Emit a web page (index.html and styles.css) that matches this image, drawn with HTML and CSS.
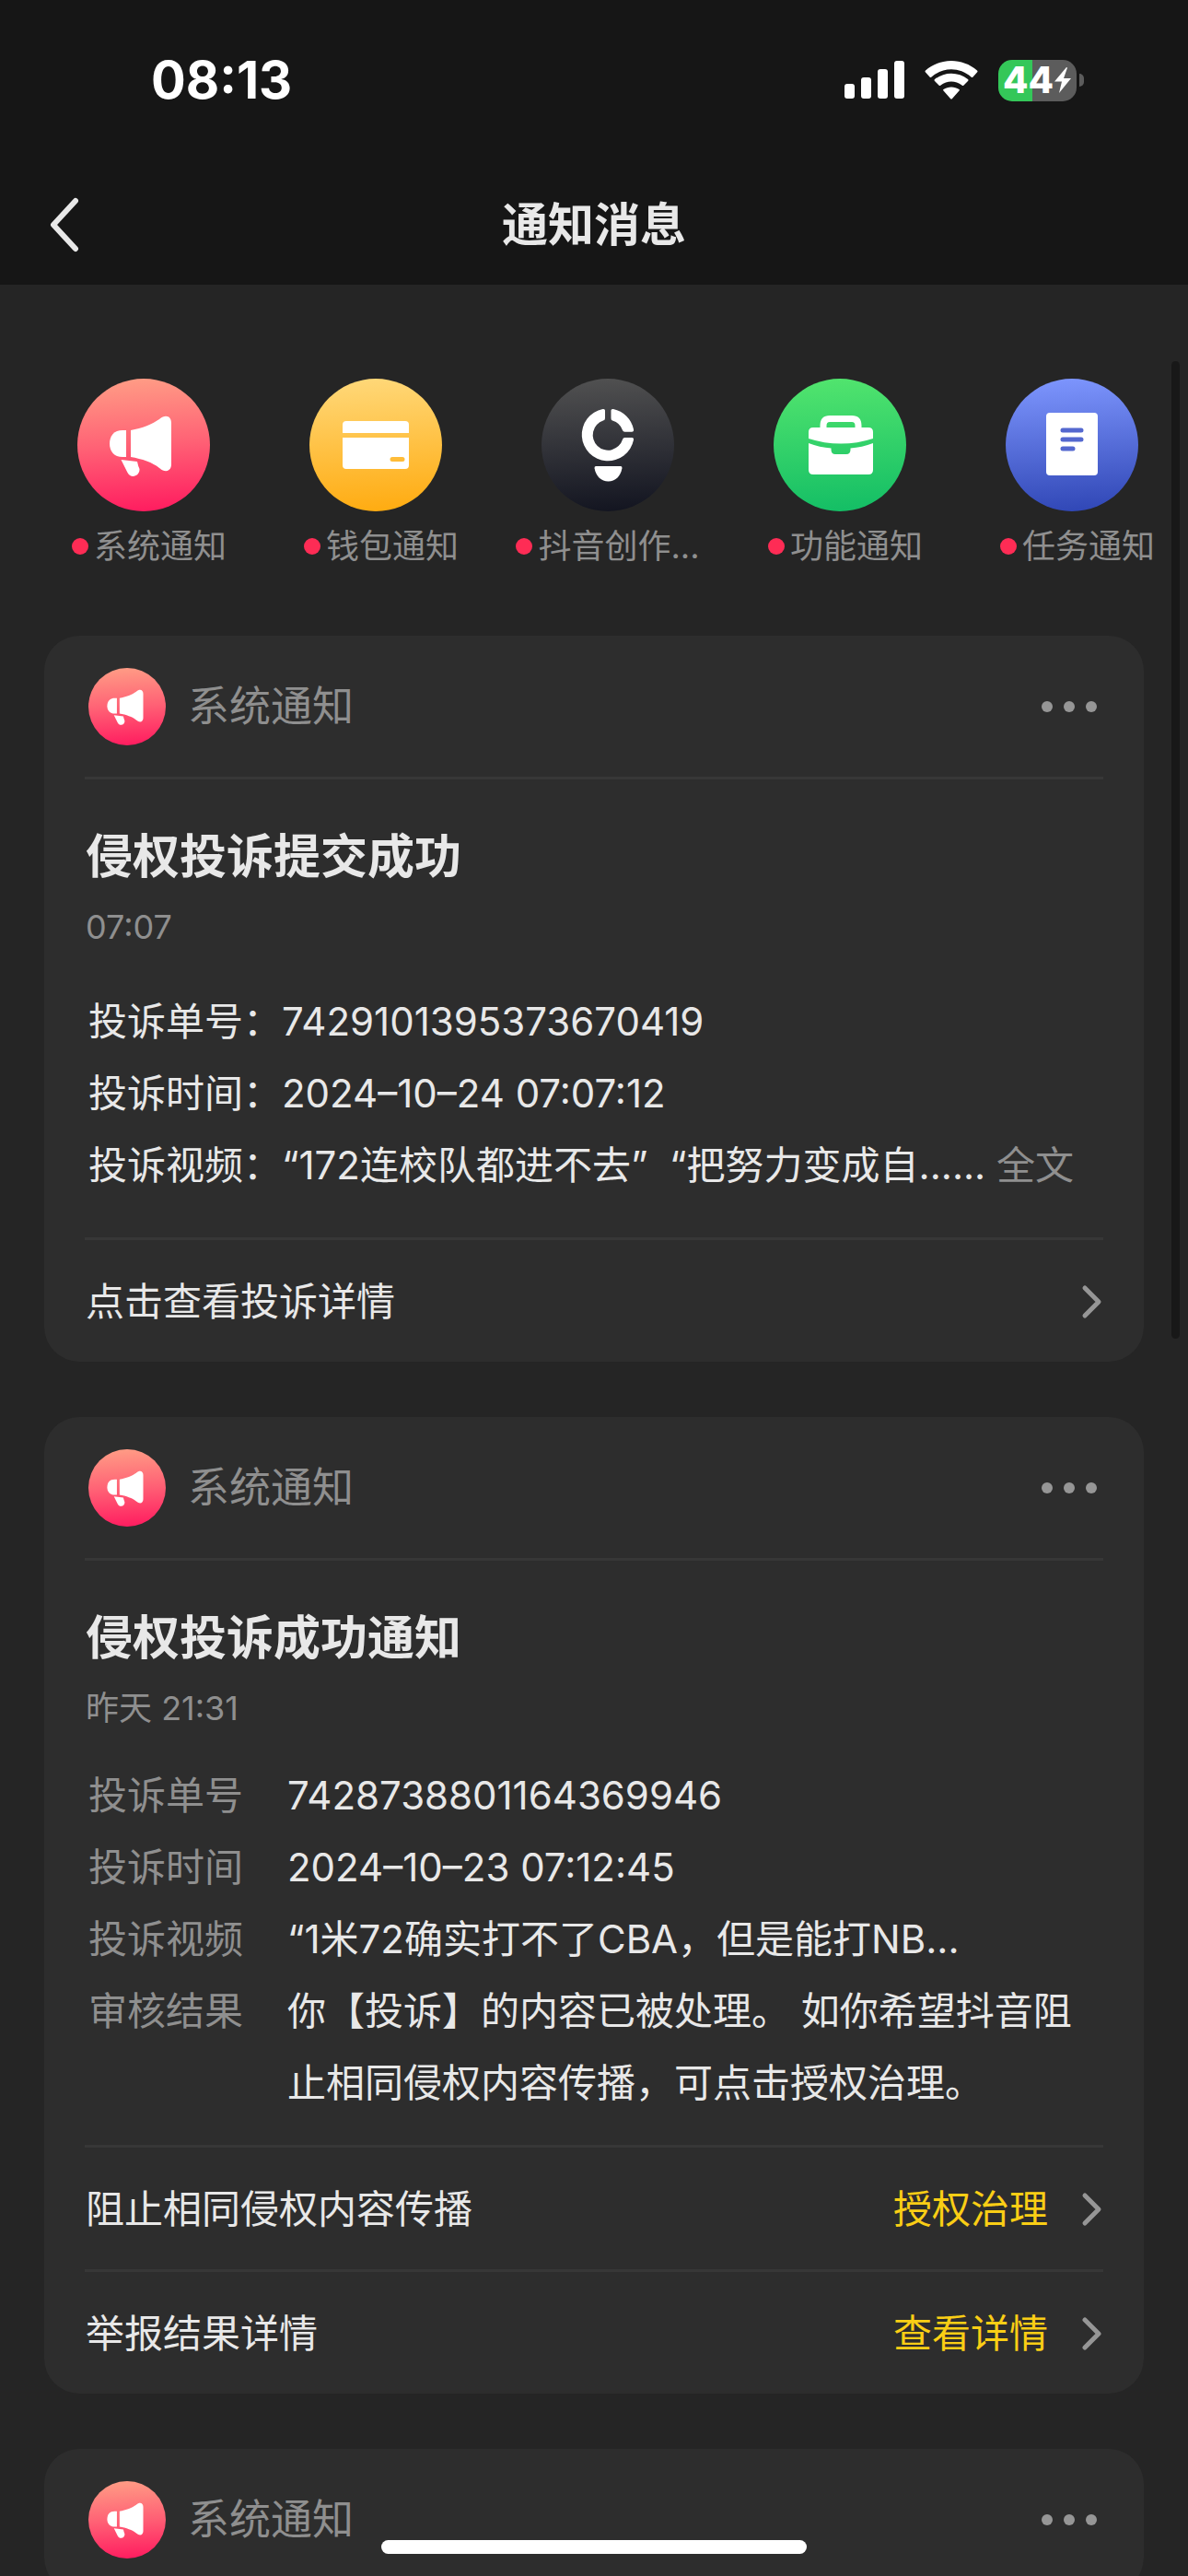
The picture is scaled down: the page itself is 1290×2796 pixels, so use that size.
FILE: index.html
```html
<!DOCTYPE html>
<html lang="zh-CN">
<head>
<meta charset="utf-8">
<meta name="viewport" content="width=device-width, initial-scale=1">
<title>通知消息</title>
<link rel="stylesheet" href="styles.css">
</head>
<body>
<svg class="defs" aria-hidden="true">
  <symbol id="megaphone" viewBox="0 0 144 144">
    <path d="M53 56H49C40 56 35 62 35 70.500S40 85 49 85H53Z"/>
    <path d="M58 56C70 54 82 49 89 44C96 38 102 41 102 48V93C102 100 96 103 89 97C82 91 70 87 58 85Z"/>
    <path d="M47.500 88L65 90Q66 95 67.500 98C68 106 58 109 54.500 102Z"/>
  </symbol>
  <symbol id="chevron" viewBox="0 0 24 40">
    <path d="M4 5L19 20L4 35" fill="none" stroke="currentColor" stroke-width="5" stroke-linecap="round" stroke-linejoin="round"/>
  </symbol>
</svg>

<div class="app">
  <header class="top">
    <div class="status">
      <time class="clock">08:13</time>
      <div class="indicators">
        <svg class="signal" viewBox="0 0 65 42" fill="#fff" aria-hidden="true">
          <rect x="0" y="25" width="11" height="16" rx="3"/><rect x="18" y="18" width="11" height="23" rx="3"/><rect x="36" y="9" width="11" height="32" rx="3"/><rect x="54" y="0" width="11" height="41" rx="3"/>
        </svg>
        <svg class="wifi" viewBox="0 0 58 42" fill="#fff" aria-hidden="true">
          <path d="M1 12.500Q0 11.500 1 10.500C17-3.500 41-3.500 57 10.500Q58 11.500 57 12.500L52.500 17.500Q51.500 18.500 50.500 17.500C38 6.500 20 6.500 7.500 17.500Q6.500 18.500 5.500 17.500Z"/>
          <path d="M11 22Q10 21 11 20C21.500 11.500 36.500 11.500 47 20Q48 21 47 22L42.500 26.500Q41.500 27.500 40.500 26.500C33.500 21 24.500 21 17.500 26.500Q16.500 27.500 15.500 26.500Z"/>
          <path d="M20.500 32.500Q19.500 31.500 20.500 31C25.500 27.500 32.500 27.500 37.500 31Q38.500 31.500 37.500 32.500L30 41Q29 42 28 41Z"/>
        </svg>
        <div class="battery">
          <div class="battery-body">
            <span>44</span>
            <svg class="bolt" viewBox="0 0 20 30" fill="#fff" aria-hidden="true"><path d="M14 1L1 16.500H9L6 29L19 13H11L15 1.500Z"/></svg>
          </div>
          <div class="battery-cap"></div>
        </div>
      </div>
    </div>
    <nav class="nav">
      <button class="back" type="button" aria-label="返回">
        <svg viewBox="0 0 34 60" aria-hidden="true"><path d="M30 4L6 30L30 56" fill="none" stroke="#e8e8e8" stroke-width="6" stroke-linecap="round" stroke-linejoin="round"/></svg>
      </button>
      <h1>通知消息</h1>
    </nav>
  </header>

  <main class="content">
    <nav class="tabs" aria-label="通知分类">
      <a class="tab" href="#system">
        <span class="disc disc-red"><svg viewBox="0 0 144 144" fill="#fff" aria-hidden="true"><use href="#megaphone"/></svg></span>
        <span class="tab-label">系统通知</span>
      </a>
      <a class="tab" href="#wallet">
        <span class="disc disc-yellow"><svg viewBox="0 0 144 144" fill="#fff" aria-hidden="true">
          <path d="M40 46H104Q108 46 108 50V59H36V50Q36 46 40 46Z"/>
          <path d="M36 64H108V94Q108 98 104 98H40Q36 98 36 94ZM90 85A2.500 2.500 0 0 0 90 90H101A2.500 2.500 0 0 0 101 85Z" fill-rule="evenodd"/>
        </svg></span>
        <span class="tab-label">钱包通知</span>
      </a>
      <a class="tab" href="#creator">
        <span class="disc disc-dark"><svg viewBox="0 0 144 144" fill="#fff" aria-hidden="true">
          <path d="M69 34.500V43Q69 45 67 45.500A16.500 16.500 0 1 0 88 66Q88.500 64 90.500 64H98Q100.500 64 100 66.500A28.400 28.400 0 1 1 66.500 33Q69 32.500 69 34.500Z"/>
          <path d="M75.500 34.500Q75.500 32.500 78 33A28.400 28.400 0 0 1 100 55Q100.500 57.700 98 57.700H90.500Q88.500 57.700 88 56A16.500 16.500 0 0 0 77 45.500Q75.500 45 75.500 43Z"/>
          <path d="M59 95H86Q87.500 95 87.500 97C86 106 80 111.500 72.500 111.500S59 106 57.500 97Q57.500 95 59 95Z"/>
        </svg></span>
        <span class="tab-label tab-label-long">抖音创作...</span>
      </a>
      <a class="tab" href="#feature">
        <span class="disc disc-green"><svg viewBox="0 0 144 144" fill="#fff" aria-hidden="true">
          <path d="M54 55V51Q54 43.500 61 43.500H85Q92 43.500 92 51V55" fill="none" stroke="#fff" stroke-width="7"/>
          <path d="M43 53H103Q108 53 108 58V65Q91 70.500 73 70.500T38 65V58Q38 53 43 53Z"/>
          <path d="M38 70Q50 74.500 62.500 75.500V77Q62.500 82 67 82H79Q83.500 82 83.500 77V75.500Q96 74.500 108 70V99Q108 104 103 104H43Q38 104 38 99Z"/>
        </svg></span>
        <span class="tab-label">功能通知</span>
      </a>
      <a class="tab" href="#task">
        <span class="disc disc-blue"><svg viewBox="0 0 144 144" fill="#fff" aria-hidden="true">
          <rect x="44" y="37" width="56" height="68" rx="4"/>
          <path d="M62 56H82M62 66H82M62 76H73" stroke="#5468cf" stroke-width="5" stroke-linecap="round"/>
        </svg></span>
        <span class="tab-label">任务通知</span>
      </a>
    </nav>

    <section class="feed">
      <article class="card">
        <header class="card-head">
          <span class="disc disc-small disc-red"><svg viewBox="0 0 144 144" fill="#fff" aria-hidden="true"><use href="#megaphone"/></svg></span>
          <span class="sender">系统通知</span>
          <button class="more" type="button" aria-label="更多"><i></i><i></i><i></i></button>
        </header>
        <div class="card-body">
          <h2>侵权投诉提交成功</h2>
          <time class="stamp">07:07</time>
          <div class="lines">
            <p>投诉单号：7429101395373670419</p>
            <p>投诉时间：2024–10–24 07:07:12</p>
            <p>投诉视频：“172连校队都进不去”&nbsp; “把努力变成自...... <a class="full" href="#full">全文</a></p>
          </div>
        </div>
        <a class="action" href="#detail"><span>点击查看投诉详情</span><svg class="chevron" aria-hidden="true"><use href="#chevron"/></svg></a>
      </article>

      <article class="card">
        <header class="card-head">
          <span class="disc disc-small disc-red"><svg viewBox="0 0 144 144" fill="#fff" aria-hidden="true"><use href="#megaphone"/></svg></span>
          <span class="sender">系统通知</span>
          <button class="more" type="button" aria-label="更多"><i></i><i></i><i></i></button>
        </header>
        <div class="card-body card-body-tight">
          <h2>侵权投诉成功通知</h2>
          <time class="stamp">昨天 21:31</time>
          <dl class="fields">
            <dt>投诉单号</dt><dd>7428738801164369946</dd>
            <dt>投诉时间</dt><dd>2024–10–23 07:12:45</dd>
            <dt>投诉视频</dt><dd>“1米72确实打不了CBA，但是能打NB...</dd>
            <dt>审核结果</dt><dd>你【投诉】的内容已被处理。 如你希望抖音阻止相同侵权内容传播，可点击授权治理。</dd>
          </dl>
        </div>
        <a class="action" href="#authorize"><span>阻止相同侵权内容传播</span><span class="action-link">授权治理</span><svg class="chevron" aria-hidden="true"><use href="#chevron"/></svg></a>
        <a class="action" href="#report"><span>举报结果详情</span><span class="action-link">查看详情</span><svg class="chevron" aria-hidden="true"><use href="#chevron"/></svg></a>
      </article>

      <article class="card">
        <header class="card-head">
          <span class="disc disc-small disc-red"><svg viewBox="0 0 144 144" fill="#fff" aria-hidden="true"><use href="#megaphone"/></svg></span>
          <span class="sender">系统通知</span>
          <button class="more" type="button" aria-label="更多"><i></i><i></i><i></i></button>
        </header>
      </article>
    </section>
  </main>
  <div class="scroll-thumb"></div>
  <div class="home-indicator"></div>
</div>
</body>
</html>
```
FILE: styles.css
```css
* {
  box-sizing: border-box;
}

body {
  margin: 0;
  background: #252525;
  color: #e8e8e8;
  font-family: Inter, "Noto Sans CJK SC", sans-serif;
  font-size: 42px;
  line-height: 78px;
}

h1, h2, p, dl, dd {
  margin: 0;
}

a {
  color: inherit;
  text-decoration: none;
}

button {
  padding: 0;
  border: 0;
  background: none;
}

.defs {
  position: absolute;
  width: 0;
  height: 0;
}

.app {
  position: relative;
  display: flex;
  flex-direction: column;
  height: 100vh;
  overflow: hidden;
}

/* Status bar and title */
.top {
  flex: none;
  background: #161616;
}

.status {
  display: flex;
  align-items: center;
  justify-content: space-between;
  height: 174px;
  padding: 0 113px 0 164px;
}

.clock {
  color: #fff;
  font-size: 56px;
  font-weight: 700;
}

.indicators {
  display: flex;
  align-items: center;
  gap: 22px;
}

.signal {
  width: 65px;
  height: 42px;
}

.wifi {
  width: 58px;
  height: 42px;
}

.battery {
  display: flex;
  align-items: center;
  gap: 3px;
}

.battery-body {
  display: flex;
  align-items: center;
  justify-content: center;
  width: 85px;
  height: 45px;
  border-radius: 15px;
  background: linear-gradient(90deg, #34c759 44%, #5c5c5c 44%);
  color: #fff;
  font-size: 40px;
  font-weight: 800;
}

.bolt {
  flex: none;
  width: 20px;
  height: 30px;
}

.battery-cap {
  width: 5px;
  height: 14px;
  border-radius: 0 6px 6px 0;
  background: #5c5c5c;
}

.nav {
  display: grid;
  grid-template-columns: 1fr auto 1fr;
  align-items: center;
  height: 135px;
  padding: 4px 52px 0;
}

.nav h1 {
  font-size: 50px;
  font-weight: 600;
}

.back {
  display: flex;
  width: 34px;
  height: 60px;
}

/* Category shortcuts */
.content {
  flex: 1;
  min-height: 0;
  overflow-y: auto;
  scrollbar-width: none;
}

.tabs {
  display: grid;
  grid-template-columns: repeat(5, 1fr);
  padding: 102px 0 73px 30px;
}

.tab {
  display: flex;
  flex-direction: column;
  align-items: center;
  gap: 14px;
}

.disc {
  display: block;
  flex: none;
  width: 144px;
  height: 144px;
  border-radius: 50%;
}

.disc svg {
  display: block;
  width: 100%;
  height: 100%;
}

.disc-small {
  width: 84px;
  height: 84px;
}

.disc-red {
  background: linear-gradient(176deg, #ff9f86, #ff6175 50%, #ff185e);
}

.disc-yellow {
  background: linear-gradient(176deg, #ffd97b, #ffaa0e);
}

.disc-dark {
  background: linear-gradient(176deg, #525252, #11131f);
}

.disc-green {
  background: linear-gradient(176deg, #53e56e, #12bd65);
}

.disc-blue {
  background: linear-gradient(176deg, #7f97ff, #2e45b4);
}

.tab-label {
  display: flex;
  align-items: center;
  gap: 6px;
  padding-left: 12px;
  color: #8f8f8f;
  font-size: 36px;
  line-height: 48px;
  white-space: nowrap;
}

.tab-label-long {
  padding-left: 0;
}

.tab-label::before {
  content: "";
  width: 18px;
  height: 18px;
  border-radius: 50%;
  background: #fe2c55;
}

/* Message cards */
.feed {
  display: flex;
  flex-direction: column;
  gap: 60px;
  padding: 0 48px;
}

.card {
  padding: 0 44px;
  border-radius: 38px;
  background: #2d2d2d;
}

.card-head {
  display: flex;
  align-items: center;
  gap: 24px;
  height: 156px;
  padding: 0 7px 0 4px;
  border-bottom: 3px solid #373737;
}

.sender {
  flex: 1;
  color: #8f8f8f;
  font-size: 45px;
}

.more {
  display: flex;
  gap: 12px;
}

.more i {
  width: 12px;
  height: 12px;
  border-radius: 50%;
  background: #969696;
}

.card-body {
  padding: 54px 0 39px;
}

.card-body-tight {
  padding-bottom: 28px;
}

.card-body h2 {
  padding-left: 1px;
  font-size: 51px;
  font-weight: 600;
  line-height: 60px;
}

.stamp {
  display: block;
  margin-top: 22px;
  padding-left: 1px;
  color: #8f8f8f;
  font-size: 36px;
  line-height: 48px;
}

.lines {
  margin-top: 40px;
  padding-left: 4px;
}

.full {
  color: #8f8f8f;
}

.fields {
  display: grid;
  grid-template-columns: 216px 1fr;
  margin-top: 32px;
  padding: 0 20px 0 4px;
}

.fields dt {
  color: #8f8f8f;
}

.action {
  display: flex;
  align-items: center;
  height: 135px;
  padding: 2px 0 0 1px;
  border-top: 3px solid #373737;
}

.action > :first-child {
  flex: 1;
}

.action-link {
  color: #face15;
}

.chevron {
  width: 24px;
  height: 40px;
  margin-left: 36px;
  color: #969696;
}

/* Overlays */
.scroll-thumb {
  position: absolute;
  top: 392px;
  right: 9px;
  width: 9px;
  height: 1061px;
  border-radius: 5px;
  background: #181818;
}

.home-indicator {
  position: absolute;
  bottom: 24px;
  left: 50%;
  width: 462px;
  height: 15px;
  margin-left: -231px;
  border-radius: 8px;
  background: #fff;
}
```
